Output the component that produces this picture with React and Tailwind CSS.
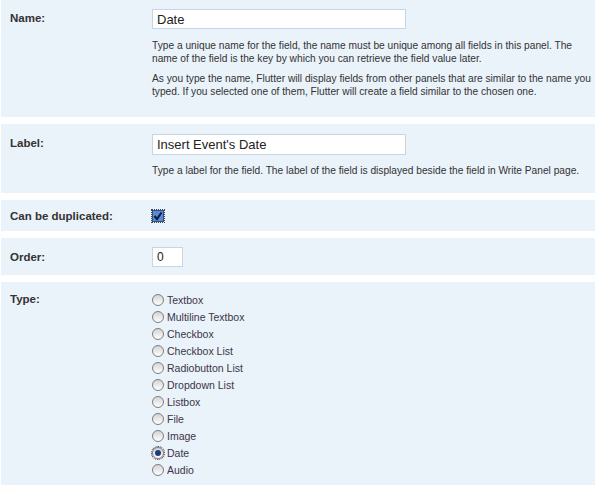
import React from 'react';

const types = [
    'Textbox',
    'Multiline Textbox',
    'Checkbox',
    'Checkbox List',
    'Radiobutton List',
    'Dropdown List',
    'Listbox',
    'File',
    'Image',
    'Date',
    'Audio',
];

// Old-style radio bullet, drawn so it looks the same everywhere
const Radio = ({ checked }) => (
    <span
        className={`relative inline-flex items-center justify-center w-[12px] h-[12px] rounded-full border border-[#7d7d7d] bg-gradient-to-b from-[#d4d4d4] to-white shrink-0 ${
            checked ? 'outline outline-1 outline-dotted outline-[#333] outline-offset-0' : ''
        }`}
    >
        {checked && <span className="w-[6px] h-[6px] rounded-full bg-[#1d3a78]" />}
    </span>
);

const Row = ({ label, className = '', labelClass = '', children }) => (
    <div className={`flex bg-[#eaf2fa] ${className}`}>
        <div className={`w-[151px] shrink-0 pl-[9px] text-[11.5px] leading-[16px] font-bold text-[#333] ${labelClass}`}>{label}</div>
        <div className="flex-1 pr-[3px]">{children}</div>
    </div>
);

const App = () => {
    return (
        <div className="w-[600px] h-[485px] overflow-hidden bg-white font-['Liberation_Sans',Arial,sans-serif]">
            <div className="ml-[1px] w-[594px] flex flex-col gap-[7px]">
                {/* Name */}
                <Row label="Name:" className="h-[117px] pt-[9px]" labelClass="pt-[1px]">
                    <input
                        readOnly
                        value="Date"
                        className="block w-[254px] h-[20px] px-[4px] border border-[#c7d5e4] bg-white text-[13px] text-[#222] outline-none"
                    />
                    <p className="mt-[10px] text-[10.2px] leading-[13px] text-[#333]">
                        Type a unique name for the field, the name must be unique among all fields in this panel. The
                        name of the field is the key by which you can retrieve the field value later.
                    </p>
                    <p className="mt-[7px] text-[10.2px] leading-[13px] text-[#333]">
                        As you type the name, Flutter will display fields from other panels that are similar to the name you
                        typed. If you selected one of them, Flutter will create a field similar to the chosen one.
                    </p>
                </Row>

                {/* Label */}
                <Row label="Label:" className="h-[69px] pt-[10px]" labelClass="pt-[1px]">
                    <input
                        readOnly
                        value="Insert Event's Date"
                        className="block w-[254px] h-[21px] px-[4px] border border-[#c7d5e4] bg-white text-[13px] text-[#222] outline-none"
                    />
                    <p className="mt-[9px] text-[10.2px] leading-[13px] text-[#333]">
                        Type a label for the field. The label of the field is displayed beside the field in Write Panel page.
                    </p>
                </Row>

                {/* Can be duplicated */}
                <Row label="Can be duplicated:" className="h-[31px] items-center">
                    <span className="flex w-[12px] h-[12px] outline outline-1 outline-dotted outline-[#444]">
                        <svg viewBox="0 0 12 12" width="12" height="12">
                            <rect x="0.5" y="0.5" width="11" height="11" fill="#5a8bd0" stroke="#2f4f86" />
                            <path d="M2.5 6 L5 9 L9.5 2.5" fill="none" stroke="#0d1b3d" strokeWidth="2" />
                        </svg>
                    </span>
                </Row>

                {/* Order */}
                <Row label="Order:" className="h-[37px] items-center">
                    <input
                        readOnly
                        value="0"
                        className="block w-[31px] h-[20px] px-[4px] border border-[#c7d5e4] bg-white text-[12px] text-[#222] outline-none"
                    />
                </Row>

                {/* Type */}
                <Row label="Type:" className="h-[210px] pt-[9px]" labelClass="pt-0">
                    <div className="flex flex-col">
                        {types.map((t) => (
                            <label key={t} className="flex items-center gap-[3px] h-[17px] text-[10.5px] text-[#3b3548]">
                                <Radio checked={t === 'Date'} />
                                <span className="mt-[2px]">{t}</span>
                            </label>
                        ))}
                    </div>
                </Row>
            </div>
        </div>
    );
};

export default App;
